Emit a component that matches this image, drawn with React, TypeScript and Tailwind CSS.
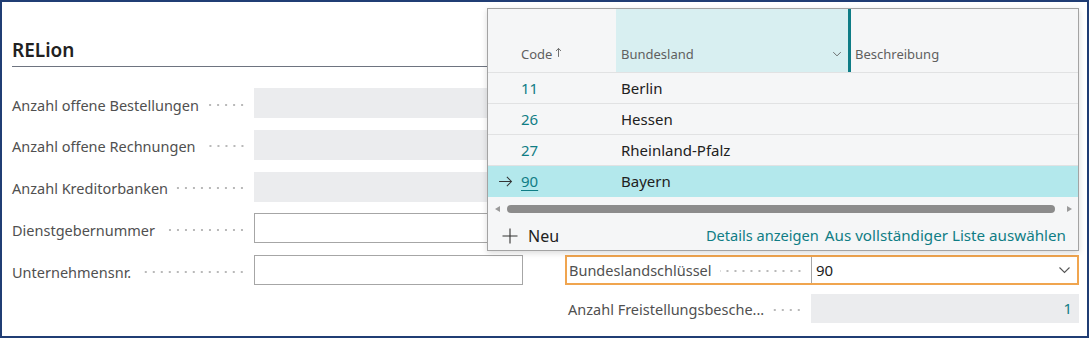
import React from "react";

const dots =
  "flex-1 h-[4px] bg-[image:radial-gradient(circle,#b9b9b9_0.9px,transparent_1.3px)] bg-[length:8px_4px] bg-repeat-x bg-[position:right_center]";

function LeftRow({ label, kind }: { label: string; kind: "gray" | "input" }) {
  return (
    <div className="flex h-[30px] items-center">
      <div className="flex w-[242px] items-center pt-[3px]">
        <span className="shrink-0 text-[14.5px] leading-[20px] text-[#505050]">{label}</span>
        <span className={`${dots} ml-[8px] mr-[8px]`} />
      </div>
      {kind === "gray" ? (
        <div className="h-full w-[269px] bg-[#ebecee]" />
      ) : (
        <div className="h-full w-[269px] border border-[#a6a6a6] bg-white" />
      )}
    </div>
  );
}

function Chevron({ className }: { className?: string }) {
  return (
    <svg viewBox="0 0 12 8" className={className} fill="none" stroke="currentColor" strokeWidth="1.1">
      <path d="M1 1.5 L6 6.5 L11 1.5" />
    </svg>
  );
}

const rows = [
  { code: "11", name: "Berlin" },
  { code: "26", name: "Hessen" },
  { code: "27", name: "Rheinland-Pfalz" },
  { code: "90", name: "Bayern", selected: true },
];

export default function App() {
  return (
    <div className="h-[338px] w-[1090px] bg-white font-['Noto_Sans',sans-serif]">
      <div className="relative h-[338px] w-[1089px] border-2 border-[#203d74]">
        <div className="pl-[10px] pr-[8px]">
          <div className="border-b border-[#6e7480] pb-[4px] pt-[36px]">
            <h2 className="text-[19px] font-semibold leading-[24px] text-[#212121]">RELion</h2>
          </div>

          <div className="mt-[21px] grid grid-cols-[511px_514px] gap-x-[42px]">
            <div className="flex flex-col gap-[11.75px]">
              <LeftRow label="Anzahl offene Bestellungen" kind="gray" />
              <LeftRow label="Anzahl offene Rechnungen" kind="gray" />
              <LeftRow label="Anzahl Kreditorbanken" kind="gray" />
              <LeftRow label="Dienstgebernummer" kind="input" />
              <LeftRow label="Unternehmensnr." kind="input" />
            </div>

            <div className="flex flex-col pt-[167px]">
              <div className="flex h-[30px] items-stretch border-2 border-[#f0a54f] bg-white">
                <div className="flex w-[244px] items-center pl-[2px] pt-[1px]">
                  <span className="shrink-0 text-[14.5px] text-[#505050]">Bundeslandschlüssel</span>
                  <span className={`${dots} ml-[8px] mr-[8px]`} />
                </div>
                <div className="flex flex-1 items-center justify-between border-l border-[#a6a6a6] pl-[4px] pr-[6px]">
                  <span className="text-[15px] text-[#212121]">90</span>
                  <Chevron className="h-[8px] w-[13px] text-[#555]" />
                </div>
              </div>
              <div className="mt-[9px] flex h-[29px] items-center">
                <div className="flex w-[246px] items-center pl-[3px] pt-[2px]">
                  <span className="shrink-0 text-[14.5px] text-[#505050]">Anzahl Freistellungsbesche...</span>
                  <span className={`${dots} ml-[8px] mr-[8px]`} />
                </div>
                <div className="flex h-full flex-1 items-center justify-end bg-[#ebecee] pr-[7px]">
                  <span className="text-[15px] text-[#0f7d85]">1</span>
                </div>
              </div>
            </div>
          </div>
        </div>

        {/* Lookup dropdown */}
        <div className="absolute left-[485px] top-[6px] flex h-[243px] w-[592px] flex-col border border-[#a3a3a3] bg-[#f5f6f7] shadow-[0_2px_6px_rgba(0,0,0,0.15)]">
          <div className="flex h-[64px] border-b border-[#e1e2e3] text-[13px] leading-[18px] text-[#5f5f5f]">
            <div className="flex w-[128px] items-end pb-[9px] pl-[33px]">
              <span>Code</span>
              <svg viewBox="0 0 8 12" className="mb-[5px] ml-[3px] h-[11px] w-[7px]" fill="none" stroke="#5f5f5f" strokeWidth="1">
                <path d="M4 11 V1.5 M1.2 4.3 L4 1.3 L6.8 4.3" />
              </svg>
            </div>
            <div className="flex w-[232px] items-end justify-between bg-[#d8eff1] pb-[9px] pl-[5px] pr-[6px]">
              <span>Bundesland</span>
              <Chevron className="mb-[6px] h-[6px] w-[10px] text-[#555]" />
            </div>
            <div className="w-[3px] bg-[#0e7c86]" />
            <div className="flex flex-1 items-end pb-[9px] pl-[4px]">
              <span>Beschreibung</span>
            </div>
          </div>

          {rows.map((r) => (
            <div
              key={r.code}
              className={`flex h-[31px] items-center border-b text-[15px] ${
                r.selected ? "border-[#b3e8ec] bg-[#b3e8ec]" : "border-[#e1e2e3]"
              }`}
            >
              <div className="flex w-[128px] items-center">
                <span className="flex w-[33px] justify-center pl-[2px]">
                  {r.selected && (
                    <svg viewBox="0 0 16 12" className="h-[11px] w-[15px]" fill="none" stroke="#333" strokeWidth="1.1">
                      <path d="M1 6 H14.5 M9.5 1 L14.5 6 L9.5 11" />
                    </svg>
                  )}
                </span>
                <span className={`text-[#0f7d85] ${r.selected ? "underline underline-offset-[3px]" : ""}`}>{r.code}</span>
              </div>
              <span className="pl-[5px] text-[#212121]">{r.name}</span>
            </div>
          ))}

          <div className="flex h-[24px] items-center gap-[7px] pl-[7px] pr-[6px]">
            <svg viewBox="0 0 5 6" className="h-[6px] w-[5px]" fill="#9a9a9a">
              <path d="M5 0 V6 L0 3 Z" />
            </svg>
            <div className="h-[8px] flex-1 rounded-full bg-[#8c8c8c]" />
            <svg viewBox="0 0 5 6" className="ml-[5px] h-[6px] w-[5px]" fill="#9a9a9a">
              <path d="M0 0 V6 L5 3 Z" />
            </svg>
          </div>

          <div className="flex flex-1 items-center pl-[14px] pr-[12px]">
            <svg viewBox="0 0 16 16" className="h-[16px] w-[16px]" fill="none" stroke="#333" strokeWidth="1.1">
              <path d="M8 0.5 V15.5 M0.5 8 H15.5" />
            </svg>
            <span className="ml-[10px] text-[16px] text-[#212121]">Neu</span>
            <span className="ml-auto text-[14.6px] text-[#0f7d85]">Details anzeigen</span>
            <span className="ml-[6px] text-[15.2px] text-[#0f7d85]">Aus vollständiger Liste auswählen</span>
          </div>
        </div>
      </div>
    </div>
  );
}
